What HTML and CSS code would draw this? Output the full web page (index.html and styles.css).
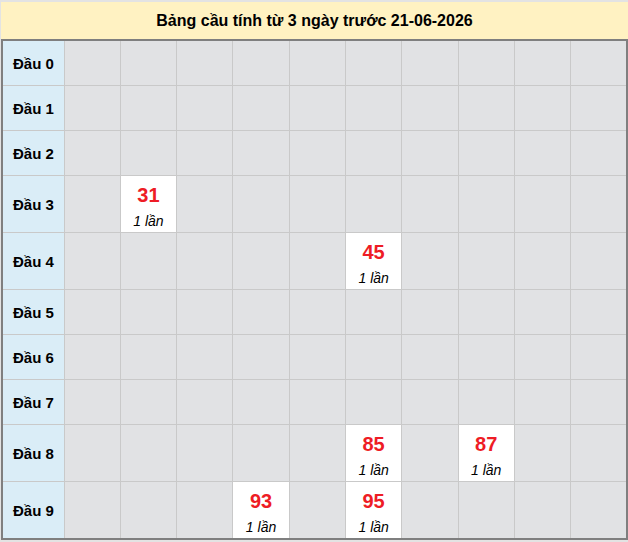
FILE: index.html
```html
<!DOCTYPE html>
<html lang="vi">
<head>
<meta charset="utf-8">
<title>Bảng cầu</title>
<link rel="stylesheet" href="styles.css">
</head>
<body>
<div class="board">
  <div class="title">Bảng cầu tính từ 3 ngày trước 21-06-2026</div>
  <table class="grid">
    <colgroup><col class="c-head"><col><col><col><col><col><col><col><col><col><col></colgroup>
    <tbody>
      <tr><th>Đầu 0</th><td></td><td></td><td></td><td></td><td></td><td></td><td></td><td></td><td></td><td></td></tr>
      <tr><th>Đầu 1</th><td></td><td></td><td></td><td></td><td></td><td></td><td></td><td></td><td></td><td></td></tr>
      <tr><th>Đầu 2</th><td></td><td></td><td></td><td></td><td></td><td></td><td></td><td></td><td></td><td></td></tr>
      <tr class="tall"><th>Đầu 3</th><td></td><td class="hit"><span class="num">31</span><span class="cnt">1 lần</span></td><td></td><td></td><td></td><td></td><td></td><td></td><td></td><td></td></tr>
      <tr class="tall"><th>Đầu 4</th><td></td><td></td><td></td><td></td><td></td><td class="hit"><span class="num">45</span><span class="cnt">1 lần</span></td><td></td><td></td><td></td><td></td></tr>
      <tr><th>Đầu 5</th><td></td><td></td><td></td><td></td><td></td><td></td><td></td><td></td><td></td><td></td></tr>
      <tr><th>Đầu 6</th><td></td><td></td><td></td><td></td><td></td><td></td><td></td><td></td><td></td><td></td></tr>
      <tr><th>Đầu 7</th><td></td><td></td><td></td><td></td><td></td><td></td><td></td><td></td><td></td><td></td></tr>
      <tr class="tall"><th>Đầu 8</th><td></td><td></td><td></td><td></td><td></td><td class="hit"><span class="num">85</span><span class="cnt">1 lần</span></td><td></td><td class="hit"><span class="num">87</span><span class="cnt">1 lần</span></td><td></td><td></td></tr>
      <tr class="tall"><th>Đầu 9</th><td></td><td></td><td></td><td class="hit"><span class="num">93</span><span class="cnt">1 lần</span></td><td></td><td class="hit"><span class="num">95</span><span class="cnt">1 lần</span></td><td></td><td></td><td></td><td></td></tr>
    </tbody>
  </table>
</div>
</body>
</html>
```

FILE: styles.css
```css
html, body {
  margin: 0;
  padding: 0;
  background: #e3e3e3;
}
body {
  padding: 2px 0 0 1px;
  font-family: "Liberation Sans", Arial, sans-serif;
  color: #000;
}
.board {
  width: 627px;
}
.title {
  height: 37px;
  background: #fff2c2;
  text-align: center;
  font-weight: bold;
  font-size: 16px;
  line-height: 37px;
}
.grid {
  width: 627px;
  border-collapse: collapse;
  table-layout: fixed;
  border: 2px solid #7f7f7f;
}
.c-head {
  width: 62px;
}
.grid th, .grid td {
  border: 1px solid #c9c9c9;
  padding: 0;
  height: 44px;
  text-align: center;
  vertical-align: middle;
}
.grid th {
  background: #daedf7;
  font-size: 15px;
  font-weight: bold;
  text-align: left;
  padding-left: 10px;
}
.grid td {
  background: #e1e2e4;
}
.grid tr.tall th, .grid tr.tall td {
  height: 56px;
}
.grid tr.tall td.hit {
  background: #fff;
  vertical-align: top;
}
.num {
  display: block;
  padding-top: 7px;
  color: #ee1c25;
  font-weight: bold;
  font-size: 20px;
  line-height: 24px;
}
.cnt {
  display: block;
  padding-top: 3px;
  font-style: italic;
  font-size: 14px;
  line-height: 22px;
}
```
